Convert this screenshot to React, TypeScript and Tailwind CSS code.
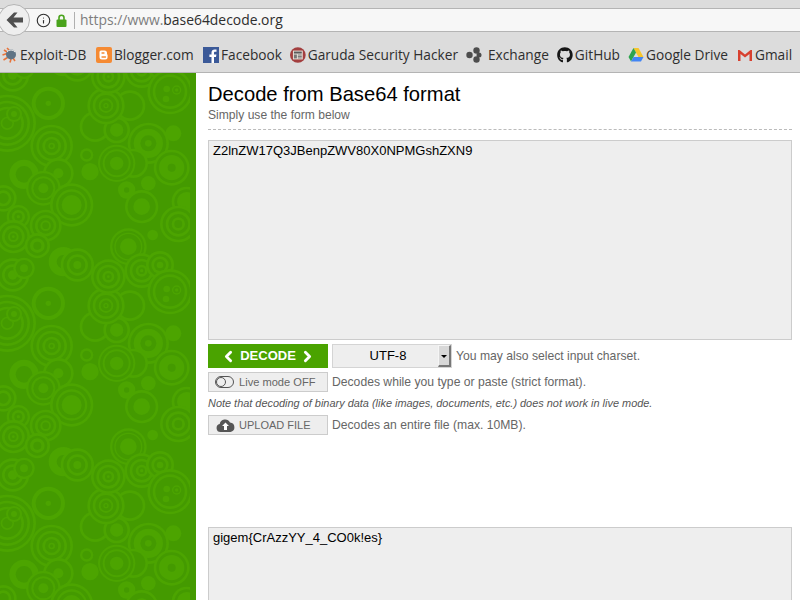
import React from 'react';
import { ChevronLeft, ChevronRight, Info } from 'lucide-react';
import { FaGithub } from 'react-icons/fa';

const LIGHT = '#4ca400';
const DARK = '#449a00';

// tile is 570x600 here, drawn at a third of that size
// cx, cy, then radii from the outside in; colours alternate starting from light
const blobs: [number, number, number[]][] = [
  [270, 470, [26]],
  [445, 505, [22]],
  [520, 355, [24]],
  [458, 60, [16]],
  [260, 420, [20, 13]],
  [22, 325, [86, 78, 68, 60, 50, 42, 20, 15]],
  [42, 297, [24, 18, 9]],
  [145, 265, [50, 38, 8]],
  [155, 393, [64, 56, 46, 38, 28, 20, 10, 5]],
  [390, 272, [46, 38]],
  [285, 335, [46, 38]],
  [350, 345, [40, 32, 20]],
  [318, 272, [56, 48, 40, 32, 22, 16, 8, 4]],
  [445, 385, [62, 54, 44, 24, 10]],
  [400, 445, [44, 36]],
  [350, 445, [56, 50, 42, 36, 20]],
  [515, 458, [54, 46, 38, 12]],
  [72, 478, [44, 25]],
  [175, 475, [46, 38, 15]],
  [130, 520, [52, 45, 36, 30, 15]],
  [380, 525, [26, 8]],
  [425, 575, [50, 42, 25]],
  [215, 570, [65, 57, 47, 40, 30]],
  [10, 550, [40, 32, 24, 16]],
  [560, 560, [45, 37, 29]],
  [40, 65, [50, 42, 34, 26, 16, 10, 4]],
  [55, 605, [35, 28, 20, 12, 5]],
  [137, 32, [48, 40, 32, 24, 16, 10]],
  [112, 92, [38, 30, 22, 12]],
  [385, 95, [55, 48, 42, 38, 25]],
  [535, 27, [55, 47, 38, 30, 20, 12]],
  [190, 140, [44, 20]],
  [232, 150, [50, 42, 32, 24, 12]],
  [38, 180, [50, 42, 32, 24, 14]],
  [72, 160, [32, 25, 12]],
  [325, 185, [52, 44, 36, 28, 18, 10, 4]],
  [425, 167, [52, 44, 36, 28, 18, 10, 5]],
  [480, 150, [42, 34, 26, 18, 10]],
  [510, 230, [68, 60, 52, 44]],
  [530, 225, [14, 10, 5]],
  [500, 222, [10]],
  [498, 252, [10]],
];

function Pattern() {
  return (
    <svg viewBox="0 -426 570 1581" width="190" height="527" className="block shrink-0">
      <rect x="0" y="-426" width="570" height="1581" fill={DARK} />
      {[-600, 0, 600, 1200].map((dy) => (
        <g key={dy} transform={`translate(0 ${dy})`}>
          {blobs.map(([cx, cy, radii], i) => (
            <g key={i}>
              {radii.map((r, j) => (
                <circle key={j} cx={cx} cy={cy} r={r} fill={j % 2 === 0 ? LIGHT : DARK} />
              ))}
            </g>
          ))}
        </g>
      ))}
    </svg>
  );
}

const BackArrow = () => (
  <svg width="18" height="16" viewBox="0 0 18 16" className="ml-[2px]">
    <path d="M0.500 8L8 0.500h3.500L7.500 5.500H17v5H7.500l4 5H8z" fill="#4f4f4f" />
  </svg>
);

const LockIcon = () => (
  <svg width="11" height="13" viewBox="0 0 11 13" className="ml-[5px]">
    <path d="M3 6V3.700a2.500 2.500 0 0 1 5 0V6" fill="none" stroke="#4aa31c" strokeWidth="1.600" />
    <rect x="0.500" y="5.500" width="10" height="7.500" rx="1" fill="#4aa31c" />
  </svg>
);

const CloudIcon = () => (
  <svg width="19" height="14" viewBox="0 0 19 14">
    <path d="M4.500 14A4 4 0 0 1 3.700 6.100 5.500 5.500 0 0 1 14 4.500 4.800 4.800 0 0 1 14.500 14z" fill="#555555" />
    <path d="M9.500 4.500L13 8h-2v4H8V8H6z" fill="#ffffff" />
  </svg>
);

const ExploitIcon = () => (
  <svg width="16" height="16" viewBox="0 0 16 16">
    <path d="M0.500 8L5 6.500M2 3l3 2M1.500 13l4-2.500M8 15.500l1-3.500M13 14l-2-3M5 1l2 2" stroke="#e8743b" strokeWidth="1.600" />
    <circle cx="9" cy="7.500" r="5" fill="#5f7384" />
    <path d="M5 5a5 5 0 0 1 8 0" stroke="#e9e9e9" strokeWidth="1" fill="none" />
  </svg>
);

const BloggerIcon = () => (
  <svg width="16" height="16" viewBox="0 0 16 16">
    <rect width="16" height="16" rx="2" fill="#f58a33" />
    <path d="M5 3.500h3.500A2.500 2.500 0 0 1 11 6v1.200l.6.6V10a2.500 2.500 0 0 1-2.500 2.500H6A2.500 2.500 0 0 1 3.500 10V5A1.500 1.500 0 0 1 5 3.500z" fill="#fff" />
    <path d="M6 6h2M6 10h3.500" stroke="#f58a33" strokeWidth="1.300" strokeLinecap="round" />
  </svg>
);

const FacebookIcon = () => (
  <svg width="16" height="16" viewBox="0 0 16 16">
    <rect width="16" height="16" fill="#3b5998" />
    <path d="M11 16V10h2l.4-2.500H11V6c0-.8.3-1.200 1.200-1.200h1.300V2.600C13 2.500 12.400 2.500 11.700 2.500 9.800 2.500 8.500 3.600 8.500 5.700v1.800H6.400V10h2.100v6z" fill="#fff" />
  </svg>
);

const GarudaIcon = () => (
  <svg width="16" height="16" viewBox="0 0 16 16">
    <circle cx="8" cy="8" r="8" fill="#a33f3f" />
    <rect x="3" y="3.500" width="10" height="9" fill="#e6e0d8" />
    <rect x="4" y="4.500" width="8" height="2" fill="#5a5a5a" />
    <rect x="4" y="7.500" width="3" height="4" fill="#777" />
    <path d="M8 8h4M8 9.500h4M8 11h4" stroke="#777" />
  </svg>
);

const ExchangeIcon = () => (
  <svg width="16" height="16" viewBox="0 0 16 16" fill="#4d4d4d">
    <circle cx="3.500" cy="8" r="3.200" />
    <circle cx="10.500" cy="3.500" r="3.200" />
    <circle cx="10.500" cy="12.500" r="3.200" />
    <circle cx="13" cy="8" r="2.500" />
  </svg>
);

const DriveIcon = () => (
  <svg width="16" height="16" viewBox="0 0 16 16">
    <path d="M5.500 1h5l5 9h-5z" fill="#f7c52b" />
    <path d="M5.500 1L0.500 10l2.500 4.500 5-9z" fill="#2da44e" />
    <path d="M5.500 10h10l-2.500 4.500H3z" fill="#4285f4" />
  </svg>
);

const GmailIcon = () => (
  <svg width="16" height="16" viewBox="0 0 16 16">
    <path d="M1 14V3h1.500L8 7.500 13.500 3H15v11h-2.500V7L8 10.500 3.500 7v7z" fill="#d8402f" />
  </svg>
);

const bookmarks = [
  { label: 'Exploit-DB', icon: <ExploitIcon />, cls: 'w-[86px] gap-[2px]' },
  { label: 'Blogger.com', icon: <BloggerIcon />, cls: 'w-[99px] gap-[2px]' },
  { label: 'Facebook', icon: <FacebookIcon />, cls: 'w-[79px] gap-[2px]' },
  { label: 'Garuda Security Hacker', icon: <GarudaIcon />, cls: 'w-[168px] gap-[2px]' },
  { label: 'Exchange', icon: <ExchangeIcon />, cls: 'w-[83px] gap-[6px]' },
  { label: 'GitHub', icon: <FaGithub className="h-4 w-4 text-[#161616]" />, cls: 'w-[63px] gap-[2px]' },
  { label: 'Google Drive', icon: <DriveIcon />, cls: 'w-[101px] gap-[2px]' },
  { label: 'Gmail', icon: <GmailIcon />, cls: 'gap-[2px]' },
];

export default function App() {
  return (
    <div className="flex h-screen w-[800px] flex-col overflow-hidden bg-white font-['Liberation_Sans',sans-serif]">
      {/* browser chrome */}
      <div className="relative h-[73px] shrink-0 bg-[#dcdcdc] font-['Open_Sans',sans-serif]">
        <div className="h-2" />
        <div className="flex h-6 items-center border-y border-[#b4b4b4] bg-[#f7f7f7] pl-9">
          <Info className="h-[15px] w-[15px] text-[#2e2e2e]" strokeWidth={1.8} />
          <LockIcon />
          <div className="ml-[7px] h-[17px] w-px bg-[#b0b0b0]" />
          <div className="ml-[5px] text-[13.9px] text-[#7d7d7d]">
            https://www.<span className="text-[#2e2e2e]">base64decode.org</span>
          </div>
        </div>
        <div className="flex h-[41px] items-center gap-2 overflow-hidden border-b border-[#b4b4b4] pl-[2px] pt-[6px] whitespace-nowrap text-[13.7px] text-[#2e2e2e]">
          {bookmarks.map((b) => (
            <div key={b.label} className={`flex shrink-0 items-center ${b.cls}`}>
              {b.icon}
              <span>{b.label}</span>
            </div>
          ))}
        </div>
        <div className="absolute left-[-2px] top-1 flex h-8 w-8 items-center justify-center rounded-full border border-[#b4b4b4] bg-[#eeeeee]">
          <BackArrow />
        </div>
      </div>

      <div className="flex min-h-0 flex-1">
        {/* patterned sidebar */}
        <div className="flex w-[196px] shrink-0 bg-[#449a00]">
          <Pattern />
        </div>

        <div className="min-w-0 flex-1 pl-3 pr-2 pt-2">
          <h1 className="text-[20.2px] leading-[26px] text-black">Decode from Base64 format</h1>
          <p className="text-[12.1px] leading-[16px] text-[#666666]">Simply use the form below</p>
          <div className="mt-[6px] border-t border-dashed border-[#bbbbbb]" />

          <div className="mt-[10px] h-[200px] border border-[#cccccc] bg-[#eeeeee] px-1 py-[2px] text-[13px] leading-[15px] text-black">
            Z2lnZW17Q3JBenpZWV80X0NPMGshZXN9
          </div>

          <div className="mt-1 flex h-6 items-center text-[12.16px] text-[#666666]">
            <button className="flex h-6 w-[120px] items-center justify-center gap-[3px] bg-[#4aa300] text-[13px] font-bold text-white">
              <ChevronLeft className="h-[17px] w-[17px]" strokeWidth={4} />
              DECODE
              <ChevronRight className="h-[17px] w-[17px]" strokeWidth={4} />
            </button>
            <div className="ml-1 flex h-6 w-[120px] border border-[#d4d4d4] bg-[#eeeeee]">
              <span className="flex-1 pl-[5px] text-center text-[13px] leading-[21px] text-black">UTF-8</span>
              <div className="flex w-[13px] items-center justify-center border border-b-2 border-r-2 border-[#f5f5f5] border-b-[#777777] border-r-[#777777] bg-[#d8d8d8]">
                <div className="mt-px h-0 w-0 border-x-[3px] border-t-[3px] border-x-transparent border-t-black" />
              </div>
            </div>
            <span className="ml-1">You may also select input charset.</span>
          </div>

          <div className="mt-1 flex h-5 items-center text-[12.16px] text-[#666666]">
            <button className="flex h-5 w-[120px] items-center border border-[#cccccc] bg-[#eeeeee] pl-[6px] text-[11.1px] text-[#666666]">
              <span className="h-3 w-[19px] rounded-full border border-[#555555]">
                <span className="block h-[10px] w-[10px] rounded-full border border-[#555555]" />
              </span>
              <span className="ml-[5px]">Live mode OFF</span>
            </button>
            <span className="ml-1">Decodes while you type or paste (strict format).</span>
          </div>

          <p className="mt-[5px] text-[10.93px] italic leading-[13px] text-[#555555]">
            Note that decoding of binary data (like images, documents, etc.) does not work in live mode.
          </p>

          <div className="mt-[5px] flex h-5 items-center text-[12.16px] text-[#666666]">
            <button className="flex h-5 w-[120px] items-center border border-[#cccccc] bg-[#eeeeee] pl-[7px] text-[11px] text-[#666666]">
              <CloudIcon />
              <span className="ml-[4px]">UPLOAD FILE</span>
            </button>
            <span className="ml-1">Decodes an entire file (max. 10MB).</span>
          </div>

          <div className="mt-[92px] h-[200px] border border-[#cccccc] bg-[#eeeeee] px-1 py-[2px] text-[13px] leading-[15px] text-black">
            {'gigem{CrAzzYY_4_CO0k!es}'}
          </div>
        </div>
      </div>
    </div>
  );
}
